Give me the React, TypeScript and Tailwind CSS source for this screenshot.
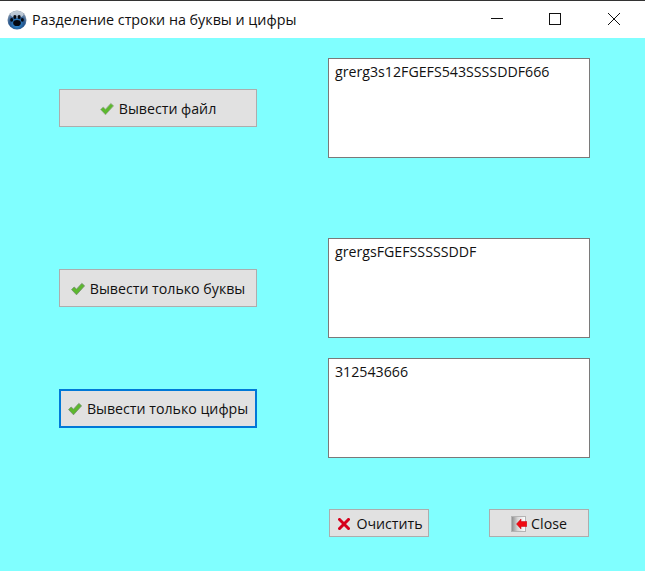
const FONT = "font-['Open_Sans','Noto_Sans',sans-serif]";

function PawIcon() {
  return (
    <svg width="20" height="20" viewBox="0 0 20 20">
      <defs>
        <radialGradient id="paw" cx="50%" cy="68%" r="62%">
          <stop offset="0%" stopColor="#35a4f0" />
          <stop offset="60%" stopColor="#24548c" />
          <stop offset="100%" stopColor="#8d9db0" />
        </radialGradient>
      </defs>
      <circle cx="10" cy="10" r="9.5" fill="url(#paw)" />
      <ellipse cx="10" cy="4.5" rx="6.5" ry="3.4" fill="#d5dde6" opacity="0.75" />
      <ellipse cx="10" cy="13" rx="3.9" ry="3.1" fill="#050810" />
      <ellipse cx="4.7" cy="9.8" rx="1.5" ry="1.9" fill="#050810" />
      <ellipse cx="7.9" cy="6.9" rx="1.6" ry="2" fill="#050810" />
      <ellipse cx="12.1" cy="6.9" rx="1.6" ry="2" fill="#050810" />
      <ellipse cx="15.3" cy="9.8" rx="1.5" ry="1.9" fill="#050810" />
    </svg>
  );
}

function Check({ dark }: { dark?: boolean }) {
  return (
    <svg width="14" height="14" viewBox="0 0 14 14" className="shrink-0">
      <path
        d="M0.6 7.6 L3.2 5 L5.5 7.2 L10.8 1.4 L13.6 3.8 L5.5 12.8 Z"
        fill="#5cb82e"
        stroke={dark ? "#6f8a68" : "#9aa896"}
        strokeWidth="0.8"
        strokeLinejoin="round"
      />
    </svg>
  );
}

function Cross() {
  return (
    <svg width="12" height="12" viewBox="0 0 12 12" className="shrink-0">
      <path d="M1.5 1.5 L10.5 10.5 M10.5 1.5 L1.5 10.5" stroke="#d5001c" strokeWidth="3" strokeLinecap="square" />
    </svg>
  );
}

function ExitIcon() {
  return (
    <svg width="16" height="16" viewBox="0 0 16 16" className="shrink-0">
      <defs>
        <linearGradient id="door" x1="0" x2="1" y1="0" y2="0">
          <stop offset="0%" stopColor="#8a8a8a" />
          <stop offset="45%" stopColor="#d8d8d8" />
          <stop offset="100%" stopColor="#ffffff" />
        </linearGradient>
      </defs>
      <rect x="0.5" y="0.5" width="14" height="15" fill="url(#door)" stroke="#b4b4b4" />
      <path d="M5.5 8 L10 3 V5.5 H15.8 V10.5 H10 V13 Z" fill="#f00a12" stroke="#c80010" strokeWidth="0.5" />
    </svg>
  );
}

function ActionButton({ label, focused, dark }: { label: string; focused?: boolean; dark?: boolean }) {
  return (
    <button
      className={
        focused
          ? "flex h-[39px] w-[198px] items-center justify-center gap-[5px] border-2 border-[#0078d7] bg-[#e1e1e1] pt-px text-[14.2px] text-[#111]"
          : "flex h-[38px] w-[198px] items-center justify-center gap-[5px] border border-[#adadad] bg-[#e1e1e1] pt-px text-[14.2px] text-[#111]"
      }
    >
      <Check dark={dark} />
      {label}
    </button>
  );
}

function OutputBox({ text }: { text: string }) {
  return (
    <div className="h-[100px] w-[262px] border border-[#7a7a7a] bg-white px-[6px] py-[3px] text-[14.2px] leading-[20px] text-[#111]">
      {text}
    </div>
  );
}

export default function App() {
  return (
    <div className={`flex h-[571px] w-[645px] flex-col overflow-hidden bg-[#80ffff] ${FONT}`}>
      {/* title bar */}
      <div className="flex h-[38px] shrink-0 items-center border-t border-[#333] bg-white pl-[7px] text-[14.3px] text-[#111]">
        <PawIcon />
        <span className="ml-[5px]">Разделение строки на буквы и цифры</span>
        <div className="ml-auto flex h-full items-center">
          <svg width="46" height="37" viewBox="0 0 46 37">
            <path d="M10 17.5 H22" stroke="#111" strokeWidth="1" />
          </svg>
          <svg width="60" height="37" viewBox="0 0 60 37">
            <rect x="22.5" y="12.5" width="11" height="11" fill="none" stroke="#111" strokeWidth="1" />
          </svg>
          <svg width="58" height="37" viewBox="0 0 58 37">
            <path d="M21 12 L33 24 M33 12 L21 24" stroke="#111" strokeWidth="1" />
          </svg>
        </div>
      </div>

      {/* form */}
      <div className="flex flex-col pl-[59px] pt-[20px]">
        <div className="flex items-center gap-[71px]">
          <ActionButton label="Вывести файл" />
          <OutputBox text="grerg3s12FGEFS543SSSSDDF666" />
        </div>
        <div className="mt-[80px] flex items-center gap-[71px]">
          <ActionButton label="Вывести только буквы" dark />
          <OutputBox text="grergsFGEFSSSSSDDF" />
        </div>
        <div className="mt-[20px] flex items-center gap-[71px]">
          <ActionButton label="Вывести только цифры" focused dark />
          <OutputBox text="312543666" />
        </div>
        <div className="ml-[270px] mt-[51px] flex gap-[60px]">
          <button className="flex h-[28px] w-[100px] items-center justify-center gap-[6px] border border-[#adadad] bg-[#e1e1e1] pl-[3px] pt-px text-[14.2px] text-[#111]">
            <Cross />
            Очистить
          </button>
          <button className="flex h-[28px] w-[100px] items-center justify-center gap-[4px] border border-[#adadad] bg-[#e1e1e1] pt-px text-[14.2px] text-[#111]">
            <ExitIcon />
            Close
          </button>
        </div>
      </div>
    </div>
  );
}
